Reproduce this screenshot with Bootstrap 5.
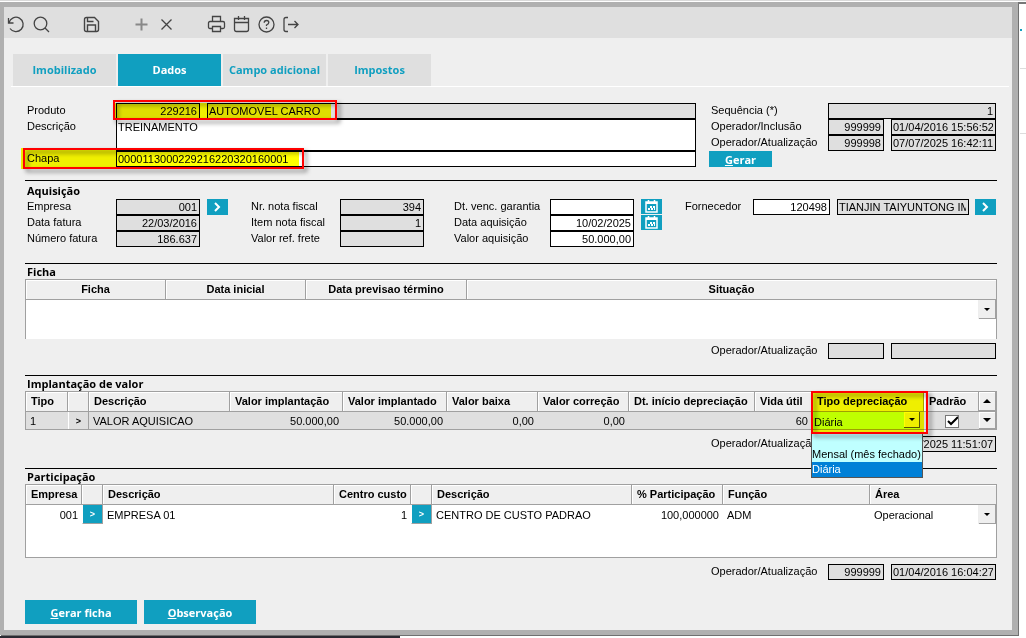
<!DOCTYPE html>
<html lang="pt-BR">
<head>
<meta charset="utf-8">
<meta name="viewport" content="width=device-width, initial-scale=1">
<title>Imobilizado - Dados</title>
<link rel="stylesheet" href="https://cdn.jsdelivr.net/npm/bootstrap@5.3.0/dist/css/bootstrap.min.css">
<style>
:root{--teal:#109fc0;--face:#efefef;--ro:#dfdfdf;--edge:#a0a0a0}
body{font:11px/15px "Liberation Sans",Arial,sans-serif;color:#000;background:#fff;border-top:1px solid #d9d9d9;padding-top:1px}
.window-frame{min-width:0;border:solid #b0b0b0;border-width:5px 6px 5px 4px;background:var(--face);box-shadow:1px 1px 0 #707070}
.behind{width:8px;padding-left:2px;border-top:2px solid #777}
.behind i{display:block;border-bottom:1px solid #ddd;height:65px}
.behind i::before{content:"";display:block;position:relative;top:25px;width:2px;height:2px;background:var(--teal)}
.behind i+i::before{display:none}
.taskline{height:2px;width:39%;margin-top:1px;background:#2b2b33}
.toolbar{height:31px;background:var(--ro);padding:3px 3px 0}
.toolbar button{border:0;background:none;padding:0;width:19px;height:19px;margin-right:6px;color:#444}
.toolbar svg,.cal svg{display:block;fill:none;stroke:currentColor}
.toolbar .gap-after{margin-right:31px}
.tabs .nav-link,.sec,.btn-teal{font-family:"Open Sans","Noto Sans",sans-serif;font-weight:700;font-size:11px}
.tabs{margin:16px 3px 0 7px;padding-left:2px;gap:2px;border-bottom:1px solid #fff}
.tabs .nav-link{width:103px;height:32px;line-height:32px;padding:0;text-align:center;color:var(--teal);background:var(--ro);border-radius:0;white-space:nowrap}
.tabs .nav-link.active{background:var(--teal);color:#fff}
.content{padding:16px 15px 6px 21px}
.fld{display:block;min-width:0;width:100%;height:16px;border:1px solid #000;border-radius:0;background:#fff;color:#000;font:inherit;line-height:14px;padding:0 2px 0 1px;resize:none;overflow:hidden;outline:0}
.fld[readonly]{background:var(--ro)}
.num{text-align:right}
.content label{padding-left:2px;white-space:nowrap;height:16px;line-height:15px}
.head-grid{display:grid;grid-template-columns:91px 84px 7px 1fr;grid-template-rows:16px 32px 16px}
.audit-row{display:grid;grid-template-columns:119px 56px 7px 105px;height:16px;padding-right:1px;justify-content:end}
.audit-side{padding-left:13px}
.span-rest{grid-column:2 / -1}
.rule{border:0;border-top:1px solid #000;opacity:1;margin:16px 0 0}
.rule-first{margin-top:13px}
.sec{line-height:15px;margin:0;padding-left:2px}
.sec-aq{height:18px;padding-top:2px}
.grp{display:grid;grid-auto-rows:16px;align-content:start}
.grp-emp{grid-template-columns:91px 84px 28px;margin-right:21px}
.grp-nota{grid-template-columns:91px 84px;margin-right:28px}
.grp-datas{grid-template-columns:98px 84px 28px;margin-right:21px}
.grp-forn{grid-template-columns:70px 77px 7px 1fr 27px;padding-right:1px}
.grp label{grid-column:1}
.grp button{justify-self:end}
.btn-teal{background:var(--teal);color:#fff;border:0;border-radius:0;padding:0}
.btn-teal:hover{background:#0d8aa7;color:#fff}
.gen{width:63px;height:16px;line-height:15px}
.go{width:21px;height:16px;display:grid;place-items:center}
.go svg{display:block;fill:none;stroke:#fff;stroke-width:2}
.cal{width:21px;height:15px;display:grid;place-items:center;color:#fff}
.sheet{border:1px solid var(--edge);background:#fff}
.sheet table{width:100%;table-layout:fixed;border-collapse:separate;border-spacing:0}
.sheet th{height:20px;padding:0 5px;font-size:11px;line-height:17px;background:var(--face);border-right:1px solid var(--edge);border-bottom:1px solid var(--edge);box-shadow:inset 1px 1px #fff;white-space:nowrap}
.sheet th:last-child,.sheet td:last-child{border-right:0}
.sheet td{height:19px;padding:0 4px;line-height:16px;white-space:nowrap;vertical-align:middle}
.sheet .btn-cell{padding:0}
.ficha{height:60px;border-bottom:0}
.ficha th:nth-child(1),.ficha th:nth-child(2){width:140px}
.ficha th:nth-child(3){width:161px}
.valor td{height:17px;background:var(--ro);padding:0 4px}
.valor th:nth-child(1){width:42px}.valor th:nth-child(2){width:21px}
.valor th:nth-child(4){width:113px}.valor th:nth-child(5){width:104px}
.valor th:nth-child(6),.valor th:nth-child(7){width:91px}
.valor th:nth-child(8){width:126px}.valor th:nth-child(9){width:57px}
.valor th:nth-child(10){width:112px}.valor th:nth-child(11){width:55px}.valor th:nth-child(12){width:17px}
.part{height:74px}
.part th:nth-child(1){width:56px}.part th:nth-child(2),.part th:nth-child(5){width:21px}
.part th:nth-child(4){width:77px}.part th:nth-child(6){width:200px}.part th:nth-child(7){width:91px}
.part th:nth-child(8){width:147px}.part th:nth-child(9){width:126px}
.row-go{display:block;width:100%;height:19px;border:0;border-left:1px solid #fff;border-right:1px solid var(--edge);border-bottom:1px solid var(--edge);padding:0;font:inherit;font-size:9px;font-weight:700;line-height:18px;background:var(--teal);color:#fff}
.valor .row-go{height:17px;border-bottom:0;background:var(--ro);color:#000}
.spin{display:grid;place-items:center;width:17px;height:19px;padding:0;border:0;border-right:1px solid var(--edge);border-bottom:1px solid var(--edge);background:var(--face);box-shadow:-1px 0 #eee}
.valor .spin{height:17px;box-shadow:inset 1px 1px #fff}
.valor th .spin{height:19px}
.spin::before{content:"";border:4px solid transparent;border-bottom:0;border-top-color:#000}
.spin-sm::before{border-width:3px;border-bottom:0}
.spin-up::before{border:4px solid transparent;border-top:0;border-bottom-color:#000}
.mark-box{position:absolute;pointer-events:none}
.mark-box::before{content:"";position:absolute;z-index:2;inset:3px 6px 0 0;background:#ff0;mix-blend-mode:multiply}
.mark-box::after{content:"";position:absolute;z-index:3;inset:0;border:2px solid #f00;filter:drop-shadow(3px 3px 2px rgba(0,0,0,.5))}
.mark-prod{left:88px;top:-3px;width:224px;height:20px}
.mark-chapa{left:-2px;top:45px;width:281px;height:21px}
.mark-chapa::before{inset:0 5px 0 -2px}
.mark-tipo{left:-1px;top:-1px;width:117px;height:43px}
.mark-tipo::before{inset:1px 4px 2px 1px}
.combo{display:flex;height:17px;background:#bfffff;width:108px}
.combo select{appearance:none;border:0;background:none;font:inherit;line-height:16px;flex:1;padding:2px 0 0 2px;min-width:0}
.combo .spin{width:16px;height:16px;border-color:#555}
.options{position:absolute;z-index:1;top:20px;left:-1px;width:112px;height:46px;margin:0;padding:0;list-style:none;border:1px solid #555;background:#bfffff}
.options li{height:15px;line-height:15px;white-space:nowrap}
.options li:first-child{height:14px}
.options .picked{background:#0080d7;color:#fff}
.tick{appearance:none;display:block;margin:1px auto 0;width:14px;height:13px;border:1px solid #777;background:#fff url("data:image/svg+xml,%3Csvg xmlns='http://www.w3.org/2000/svg' viewBox='0 0 12 11'%3E%3Cpath d='M2 5l3 3 7-7' fill='none' stroke='%23000' stroke-width='2'/%3E%3C/svg%3E")}
.space6{margin-top:6px}
.actions{gap:7px;margin-top:20px}
.btn-form{width:112px;height:24px}
</style>
<script src="https://cdn.jsdelivr.net/npm/bootstrap@5.3.0/dist/js/bootstrap.bundle.min.js"></script>
</head>
<body>
<div class="d-flex">
<div class="window-frame flex-grow-1">
<header class="toolbar d-flex align-items-center">
 <button aria-label="Desfazer"><svg width="19" height="19" viewBox="0 0 19 19"><path d="M1.500 3v5h5M2 7.500A7.200 7.200 0 1 1 3 13.500" stroke-width="1.300"/></svg></button>
 <button class="gap-after" aria-label="Pesquisar"><svg width="19" height="19" viewBox="0 0 19 19"><circle cx="8.500" cy="8.500" r="6.300" stroke-width="1.300"/><path d="M13 13l4 4" stroke-width="1.300"/></svg></button>
 <button class="gap-after" aria-label="Salvar"><svg width="19" height="19" viewBox="0 0 19 19"><path d="M2.500 4.500q0-2 2-2h8l4 4v8q0 2-2 2h-10q-2 0-2-2zM5.500 16v-6h8v6M5.500 3v3.500h6" stroke-width="1.400"/></svg></button>
 <button aria-label="Incluir"><svg width="19" height="19" viewBox="0 0 19 19"><path d="M9.500 3.500v12M3.500 9.500h12" stroke="#888" stroke-width="2"/></svg></button>
 <button class="gap-after" aria-label="Excluir"><svg width="19" height="19" viewBox="0 0 19 19"><path d="M4.500 4.500l10 10M14.500 4.500l-10 10" stroke-width="1.300"/></svg></button>
 <button aria-label="Imprimir"><svg width="19" height="19" viewBox="0 0 19 19"><path d="M5.500 6V1.500h8V6M5.500 13.500H3q-1.500 0-1.500-1.500V8Q1.500 6.500 3 6.500h13q1.500 0 1.500 1.500v4q0 1.500-1.500 1.500h-2.500M5.500 11.500h8v5h-8z" stroke-width="1.300"/></svg></button>
 <button aria-label="Calendário"><svg width="19" height="19" viewBox="0 0 19 19"><path d="M2.500 3.500h14v11q0 2-2 2h-10q-2 0-2-2zM2.500 7.500h14M6.500 1v4M12.500 1v4" stroke-width="1.300"/></svg></button>
 <button aria-label="Ajuda"><svg width="19" height="19" viewBox="0 0 19 19"><circle cx="9.500" cy="9.500" r="7.500" stroke-width="1.300"/><path d="M7.200 7.800q0-2.300 2.300-2.300t2.300 2q0 1.500-2.300 2.500v1M9.500 12.500v1.500" stroke-width="1.300"/></svg></button>
 <button aria-label="Sair"><svg width="19" height="19" viewBox="0 0 19 19"><path d="M6 2.500H4q-2 0-2 2v10q0 2 2 2h2M6 9.500h10M12.500 6l3.500 3.500-3.500 3.500" stroke-width="1.300"/></svg></button>
</header>
<nav class="nav tabs">
 <a class="nav-link" href="#imobilizado">Imobilizado</a>
 <a class="nav-link active" aria-current="page" href="#dados">Dados</a>
 <a class="nav-link" href="#campo">Campo adicional</a>
 <a class="nav-link" href="#impostos">Impostos</a>
</nav>
<main class="content">
 <section class="d-flex">
  <div class="head-grid position-relative flex-grow-1">
   <label for="prod">Produto</label><input id="prod" class="fld num" value="229216" readonly><span></span><input class="fld" aria-label="Nome do produto" value="AUTOMOVEL CARRO" readonly>
   <label for="desc">Descrição</label><textarea id="desc" class="fld span-rest h-100">TREINAMENTO</textarea>
   <label for="chapa">Chapa</label><input id="chapa" class="fld span-rest" value="0000113000229216220320160001">
   <div class="mark-box mark-prod"></div><div class="mark-box mark-chapa"></div>
  </div>
  <div class="audit-side flex-shrink-0">
   <div class="audit-row"><label for="seq">Sequência (*)</label><input id="seq" class="fld num span-rest" value="1" readonly></div>
   <div class="audit-row"><label for="inc">Operador/Inclusão</label><input id="inc" class="fld num" value="999999" readonly><span></span><input class="fld" aria-label="Data de inclusão" value="01/04/2016 15:56:52" readonly></div>
   <div class="audit-row"><label for="atu">Operador/Atualização</label><input id="atu" class="fld num" value="999998" readonly><span></span><input class="fld" aria-label="Data de atualização" value="07/07/2025 16:42:11" readonly></div>
   <button class="btn-teal d-block gen"><u>G</u>erar</button>
  </div>
 </section>
 <hr class="rule rule-first">
 <section>
  <h2 class="sec sec-aq">Aquisição</h2>
  <div class="d-flex">
   <div class="grp grp-emp">
    <label for="emp">Empresa</label><input id="emp" class="fld num" value="001" readonly><button class="btn-teal go" aria-label="Abrir empresa"><svg width="9" height="10" viewBox="0 0 9 10"><path d="M2 1l4 4-4 4"/></svg></button>
    <label for="dfat">Data fatura</label><input id="dfat" class="fld num" value="22/03/2016" readonly>
    <label for="nfat">Número fatura</label><input id="nfat" class="fld num" value="186.637" readonly>
   </div>
   <div class="grp grp-nota">
    <label for="nnf">Nr. nota fiscal</label><input id="nnf" class="fld num" value="394" readonly>
    <label for="inf">Item nota fiscal</label><input id="inf" class="fld num" value="1" readonly>
    <label for="vrf">Valor ref. frete</label><input id="vrf" class="fld num" value="" readonly>
   </div>
   <div class="grp grp-datas">
    <label for="gar">Dt. venc. garantia</label><input id="gar" class="fld num" value=""><button class="btn-teal cal" aria-label="Escolher data de garantia"><svg width="13" height="13" viewBox="0 0 13 13"><path d="M1 2h11v10H1zM3.500 0v3M9.500 0v3" stroke-width="1.500"/><path d="M1 3h11" stroke-width="2"/><path d="M3 9h7M5 7h5" stroke-width="2" stroke-dasharray="2 1"/></svg></button>
    <label for="daq">Data aquisição</label><input id="daq" class="fld num" value="10/02/2025"><button class="btn-teal cal" aria-label="Escolher data de aquisição"><svg width="13" height="13" viewBox="0 0 13 13"><path d="M1 2h11v10H1zM3.500 0v3M9.500 0v3" stroke-width="1.500"/><path d="M1 3h11" stroke-width="2"/><path d="M3 9h7M5 7h5" stroke-width="2" stroke-dasharray="2 1"/></svg></button>
    <label for="vaq">Valor aquisição</label><input id="vaq" class="fld num" value="50.000,00">
   </div>
   <div class="grp grp-forn flex-grow-1">
    <label for="forn">Fornecedor</label><input id="forn" class="fld num" value="120498"><span></span><input class="fld" aria-label="Nome do fornecedor" value="TIANJIN TAIYUNTONG IMPORT" readonly><button class="btn-teal go" aria-label="Abrir fornecedor"><svg width="9" height="10" viewBox="0 0 9 10"><path d="M2 1l4 4-4 4"/></svg></button>
   </div>
  </div>
 </section>
 <hr class="rule">
 <section>
  <h2 class="sec">Ficha</h2>
  <div class="sheet ficha"><table>
   <thead><tr class="text-center"><th>Ficha</th><th>Data inicial</th><th>Data previsao término</th><th>Situação</th></tr></thead>
   <tbody><tr><td></td><td></td><td></td><td class="btn-cell"><button class="spin spin-sm ms-auto" aria-label="Rolar"></button></td></tr></tbody>
  </table></div>
  <div class="audit-row mt-1"><label for="fop">Operador/Atualização</label><input id="fop" class="fld" readonly><span></span><input class="fld" aria-label="Data" readonly></div>
 </section>
 <hr class="rule">
 <section>
  <h2 class="sec">Implantação de valor</h2>
  <div class="sheet valor"><table>
   <thead><tr><th>Tipo</th><th></th><th>Descrição</th><th>Valor implantação</th><th>Valor implantado</th><th>Valor baixa</th><th>Valor correção</th><th>Dt. início depreciação</th><th>Vida útil</th><th class="position-relative">Tipo depreciação<div class="mark-box mark-tipo"></div></th><th>Padrão</th><th class="btn-cell"><button class="spin spin-up" aria-label="Rolar para cima"></button></th></tr></thead>
   <tbody><tr><td>1</td><td class="btn-cell"><button class="row-go" aria-label="Detalhar">&gt;</button></td><td>VALOR AQUISICAO</td><td class="num">50.000,00</td><td class="num">50.000,00</td><td class="num">0,00</td><td class="num">0,00</td><td></td><td class="num">60</td>
   <td class="btn-cell position-relative"><div class="combo"><select aria-label="Tipo depreciação"><option>Diária</option><option>Mensal (mês fechado)</option></select><button class="spin spin-sm" aria-label="Abrir opções"></button></div><ul class="options" role="listbox"><li role="option">&nbsp;</li><li role="option">Mensal (mês fechado)</li><li class="picked" role="option" aria-selected="true">Diária</li></ul></td>
   <td class="btn-cell"><input class="tick" type="checkbox" checked aria-label="Padrão"></td><td class="btn-cell"><button class="spin" aria-label="Rolar para baixo"></button></td></tr></tbody>
  </table></div>
  <div class="audit-row space6"><label for="vop">Operador/Atualização</label><input id="vop" class="fld num" value="999998" readonly><span></span><input class="fld" aria-label="Data" value="07/07/2025 11:51:07" readonly></div>
 </section>
 <hr class="rule">
 <section>
  <h2 class="sec">Participação</h2>
  <div class="sheet part"><table>
   <thead><tr><th>Empresa</th><th></th><th>Descrição</th><th>Centro custo</th><th></th><th>Descrição</th><th>% Participação</th><th>Função</th><th>Área</th></tr></thead>
   <tbody><tr><td class="num">001</td><td class="btn-cell"><button class="row-go" aria-label="Abrir empresa">&gt;</button></td><td>EMPRESA 01</td><td class="num">1</td><td class="btn-cell"><button class="row-go" aria-label="Abrir centro">&gt;</button></td><td>CENTRO DE CUSTO PADRAO</td><td class="num">100,000000</td><td>ADM</td><td class="pe-0"><div class="d-flex justify-content-between align-items-center">Operacional<button class="spin spin-sm" aria-label="Rolar"></button></div></td></tr></tbody>
  </table></div>
  <div class="audit-row space6"><label for="pop">Operador/Atualização</label><input id="pop" class="fld num" value="999999" readonly><span></span><input class="fld" aria-label="Data" value="01/04/2016 16:04:27" readonly></div>
 </section>
 <div class="d-flex actions"><button class="btn-teal btn-form"><u>G</u>erar ficha</button><button class="btn-teal btn-form"><u>O</u>bservação</button></div>
</main>
</div>
<div class="behind flex-shrink-0" aria-hidden="true"><i></i><i></i></div>
</div>
<div class="taskline"></div>
</body>
</html>
